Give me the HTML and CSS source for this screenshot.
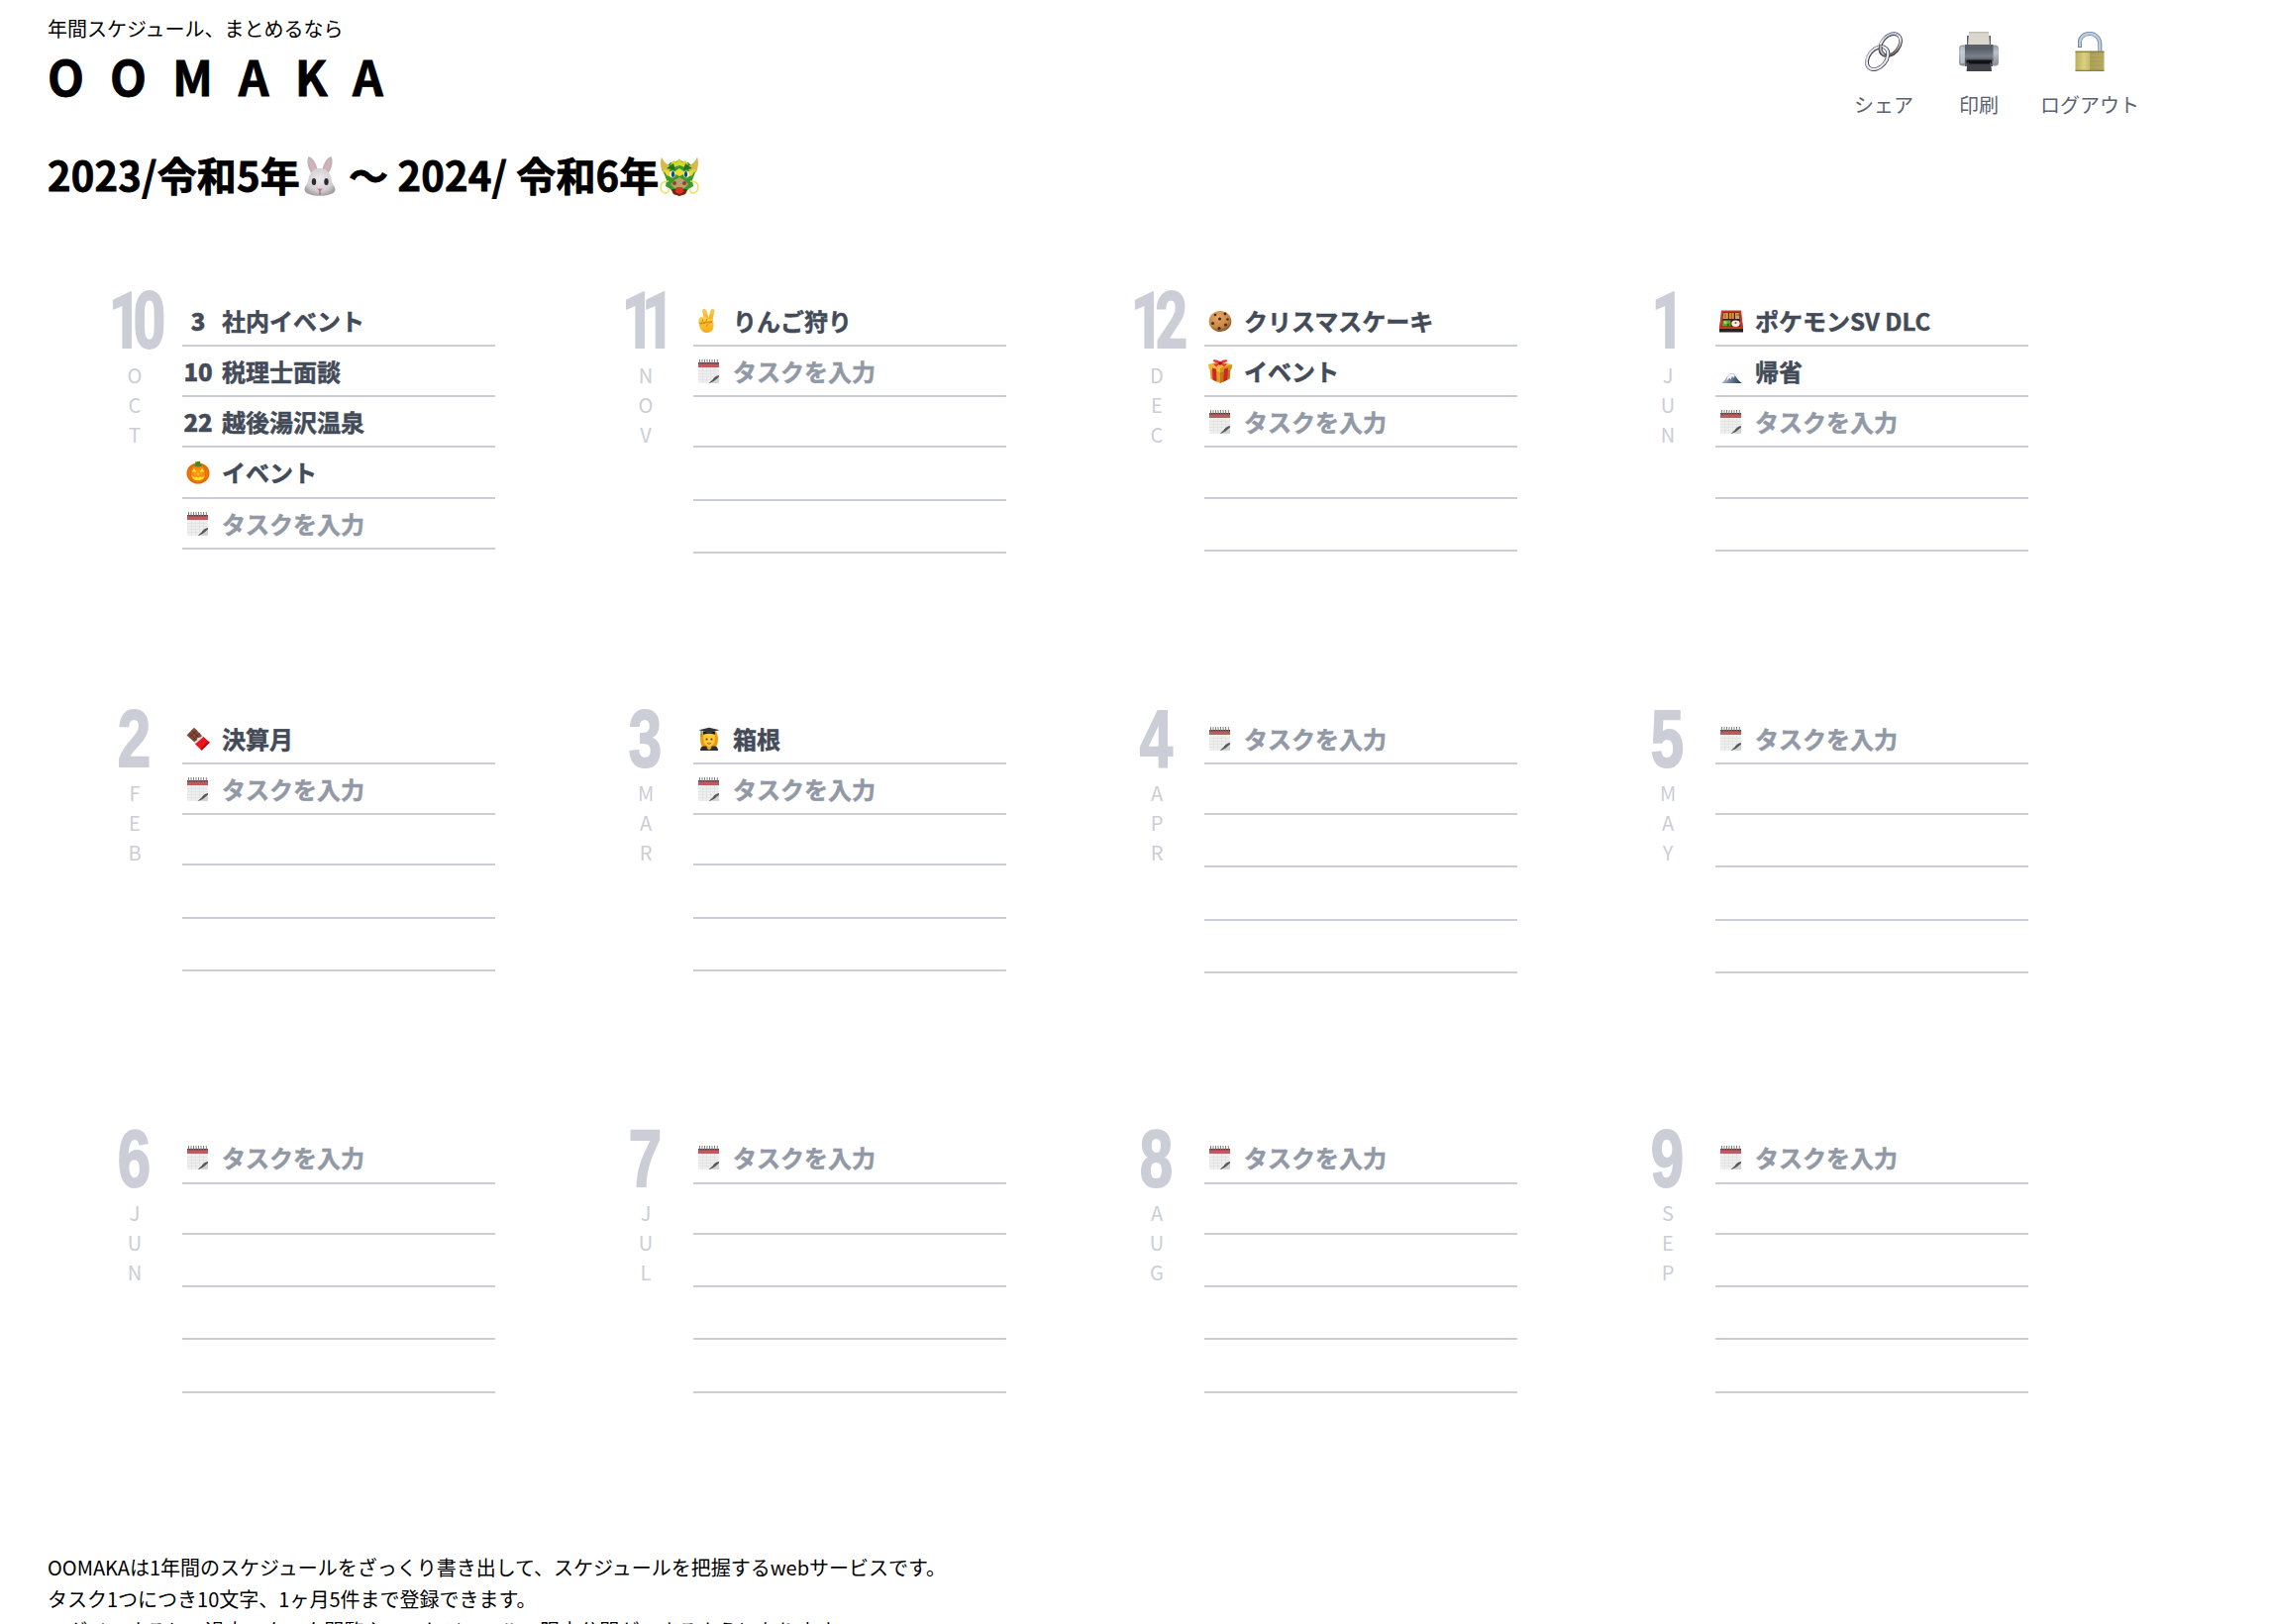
FILE: index.html
```html
<!DOCTYPE html>
<html lang="ja">
<head>
<meta charset="utf-8">
<title>OOMAKA</title>
<link rel="stylesheet" href="styles.css">
</head>
<body>
<svg class="sprite" width="0" height="0" aria-hidden="true">
  <defs>
    <linearGradient id="chrome" x1="0" y1="0" x2="1" y2="1"><stop offset="0" stop-color="#7fa3cf"/><stop offset=".35" stop-color="#eef3f8"/><stop offset=".7" stop-color="#8c929c"/><stop offset="1" stop-color="#4a3a3c"/></linearGradient>
    <linearGradient id="brass" x1="0" y1="0" x2="1" y2="0"><stop offset="0" stop-color="#b9ad58"/><stop offset=".3" stop-color="#d9d080"/><stop offset=".5" stop-color="#c5ba68"/><stop offset=".52" stop-color="#a89b52"/><stop offset="1" stop-color="#b3a860"/></linearGradient>
    <linearGradient id="steel" x1="0" y1="0" x2="0" y2="1"><stop offset="0" stop-color="#596069"/><stop offset=".25" stop-color="#596069"/><stop offset=".7" stop-color="#7b828c"/><stop offset="1" stop-color="#4b5058"/></linearGradient>
    <linearGradient id="cap" x1="0" y1="0" x2="0" y2="1"><stop offset="0" stop-color="#8e9aa6"/><stop offset=".35" stop-color="#b9c2ca"/><stop offset="1" stop-color="#858c94"/></linearGradient>
    <radialGradient id="fur" cx=".5" cy=".4" r=".6"><stop offset="0" stop-color="#eeeaec"/><stop offset=".7" stop-color="#d3ced1"/><stop offset="1" stop-color="#a59fa3"/></radialGradient>
    <radialGradient id="pump" cx=".5" cy=".5" r=".55"><stop offset="0" stop-color="#ffa21c"/><stop offset=".7" stop-color="#f47c08"/><stop offset="1" stop-color="#cf5300"/></radialGradient>
    <radialGradient id="bake" cx=".4" cy=".3" r=".7"><stop offset="0" stop-color="#e3a868"/><stop offset=".7" stop-color="#c88846"/><stop offset="1" stop-color="#8d5424"/></radialGradient>
    <linearGradient id="skin" x1="0" y1="0" x2="0" y2="1"><stop offset="0" stop-color="#ffd34a"/><stop offset="1" stop-color="#f5a916"/></linearGradient>
    <linearGradient id="fuji" x1="0" y1="0" x2="1" y2="0"><stop offset="0" stop-color="#aebccb"/><stop offset=".5" stop-color="#66788e"/><stop offset="1" stop-color="#1e3350"/></linearGradient>
  </defs>

  <symbol id="i-link" viewBox="0 0 40 40">
    <g fill="none">
      <ellipse cx="26.7" cy="13.2" rx="8.7" ry="12.4" transform="rotate(40 26.7 13.2)" stroke="#4b3437" stroke-width="3.6"/>
      <ellipse cx="26.5" cy="13" rx="8.8" ry="12.4" transform="rotate(40 26.5 13)" stroke="url(#chrome)" stroke-width="2.2"/>
      <ellipse cx="13.7" cy="26.7" rx="8.8" ry="13" transform="rotate(40 13.7 26.7)" stroke="#493e43" stroke-width="3.8"/>
      <ellipse cx="13.4" cy="26.5" rx="9" ry="13" transform="rotate(40 13.4 26.5)" stroke="#c4d3e2" stroke-width="2.4"/>
      <ellipse cx="13.6" cy="26.6" rx="8.8" ry="12.8" transform="rotate(40 13.6 26.6)" stroke="#fff" stroke-width=".9"/>
      <path d="M17 14.5c-1 3 .4 6.500 3.200 8.800" stroke="#4b4348" stroke-width="3.6"/>
      <path d="M17 14.500c-1 3 .4 6.500 3.200 8.800" stroke="#b9c0c9" stroke-width="1.800"/>
    </g>
  </symbol>
  <symbol id="i-printer" viewBox="0 0 40 40">
    <rect x="8" y="4" width="24" height="12" fill="#59626b"/>
    <path d="M10 0h20l1 14H9z" fill="#dcd7ce"/>
    <path d="M10 0h20v1.500H10z" fill="#c3beb5"/>
    <rect x="0" y="13.500" width="40" height="21" rx="3.500" fill="url(#cap)"/>
    <rect x="1.500" y="15" width="4" height="17" rx="1" fill="#c5cdd4" opacity=".7"/>
    <rect x="6" y="13" width="28.500" height="17" fill="url(#steel)"/>
    <path d="M6 30h28v5H6z" fill="#5d636b"/>
    <rect x="7.500" y="28.500" width="25.500" height="4" rx="1" fill="#15171a"/>
    <path d="M8.500 31h23.500l1 9H7.500z" fill="#3f444b"/>
    <path d="M10 30.500h21v2H10z" fill="#0e0f11"/>
  </symbol>
  <symbol id="i-lock" viewBox="0 0 30 40">
    <path d="M5 16V13C4 6 9 2 14.800 2s10.500 4 10.500 11v8" fill="none" stroke="#6e7f92" stroke-width="4"/>
    <path d="M5 15V13C4.500 6 9 2 14.800 2s10.400 4 10.400 11v8" fill="none" stroke="#b9cde4" stroke-width="2.400"/>
    <rect x=".5" y="19.500" width="29" height="20.500" rx="1" fill="url(#brass)"/>
    <path d="M.5 20.300h29M.5 39.300h29" stroke="#8d823e" stroke-width="1.200"/>
    <path d="M1 24h28M1 28h28M1 32h28M1 36h28" stroke="#e6dd94" stroke-width=".5" opacity=".35"/>
  </symbol>
  <symbol id="i-rabbit" viewBox="0 0 40 40">
    <path d="M13 19C8 13 6 5 8.500 0c5 1 9 9 9.500 17zM27 19c5-6 7-14 4.500-19-5 1-9 9-9.500 17z" fill="#bdb4b8"/>
    <path d="M13.500 17C10.500 12 9 7 10 3c3 2 5.500 8 6 13zM26.500 17c3-5 4.500-10 3.500-14-3 2-5.500 8-6 13z" fill="#dcaeb7"/>
    <path d="M20 12c8 0 11 6 12 13 .7 4 3.500 5 3.500 8.500C35.500 38 27 39.800 20 39.800S4.500 38 4.500 33.500C4.500 30 7.300 29 8 25c1-7 4-13 12-13z" fill="url(#fur)"/>
    <ellipse cx="14" cy="25.500" rx="2.200" ry="3.600" fill="#292c32"/><ellipse cx="26.500" cy="25.500" rx="2.200" ry="3.600" fill="#292c32"/>
    <path d="M17.300 32.500h5.600L20 36z" fill="#dc7088"/><path d="M20 35.500v3" stroke="#8c6168" stroke-width="1.200"/>
  </symbol>
  <symbol id="i-dragon" viewBox="0 0 40 40">
    <path d="M7 10l4-4 5-.5L20 3l4 2.500 5 .5 4 4 3 6-3 8 1 6-5 3-3 5-6 1.500-6-1.500-3-5-5-3 1-6-3-8z" fill="#3c982a"/>
    <path d="M3 16C0 9 1 4 2 .5 4 6 9 9 13 11l-5 5zM37 16c3-7 2-12 1-15.500C36 6 31 9 27 11l5 5z" fill="#d9b84c"/>
    <path d="M11 8l3-4 3 2 3-4 3 4 3-2 3 4-3 3-6-2-6 2z" fill="#d8d62f"/>
    <path d="M4 13l10 3 6-4 6 4 10-3-3 6-5 2-2-4-6 3-6-3-2 4-5-2z" fill="#e9dd32"/>
    <path d="M7 12l9 2-2-7zM33 12l-9 2 2-7z" fill="#1d7620"/>
    <ellipse cx="13" cy="18" rx="2.800" ry="3.600" fill="#e8f0e8"/><ellipse cx="27" cy="18" rx="2.800" ry="3.600" fill="#e8f0e8"/>
    <ellipse cx="13.500" cy="18" rx="1.600" ry="3" fill="#174a7a"/><ellipse cx="26.500" cy="18" rx="1.600" ry="3" fill="#174a7a"/>
    <path d="M15 24l5-3 5 3 4 4-4 4H15l-4-4z" fill="#b9a06a"/>
    <circle cx="15" cy="27" r="2" fill="#8e4133"/><circle cx="25" cy="27" r="2" fill="#8e4133"/>
    <path d="M12 33h16l-2 5-6 2-6-2z" fill="#7d2119"/><path d="M17 31h6l1 5-4 2-4-2z" fill="#e3311f"/>
    <path d="M9 25c-5 0-8 2-8 6s3 6 5 6 4-2 3-4M31 25c5 0 8 2 8 6s-3 6-5 6-4-2-3-4" fill="none" stroke="#ece24b" stroke-width="1.400"/>
  </symbol>
  <symbol id="i-pad" viewBox="0 0 24 24">
    <path d="M1 3h21v21H1z" fill="#efeff0"/>
    <path d="M1 11.500h21M1 14.500h21M1 17.500h21M1 20.500h18M5.500 8v16M9.500 8v16M13.500 8v15M17.500 8v11" stroke="#dddddf" stroke-width=".6"/>
    <path d="M1 3.500h21V8H1z" fill="#c25a5d"/><path d="M1 3h21v1.500H1z" fill="#713a3e"/>
    <path d="M2.500 0v4.500M5 0v4.500M7.500 0v4.500M10 0v4.500M12.500 0v4.500M15 0v4.500M17.500 0v4.500M20.300 0v4.500" stroke="#74747a" stroke-width=".9"/>
    <path d="M22 17.500l-4 2-3 4.500h7z" fill="#d4d5d7"/><path d="M22 16c-3 .5-5 2-6.500 4.500L11.500 24c3-.5 6-2 10.500-6.500z" fill="#56585c"/>
  </symbol>
  <symbol id="i-pumpkin" viewBox="0 0 24 24">
    <ellipse cx="12" cy="13" rx="11.500" ry="10.500" fill="url(#pump)"/>
    <path d="M8 4C3 8 3 18 8 22M16 4c5 4 5 14 0 18" fill="none" stroke="#db6203" stroke-width=".8"/>
    <path d="M9 1.500l5-.7.5 3.200 2 1.500-4.500 1-4-1 1.500-1.500z" fill="#4c861c"/>
    <path d="M6 11.500L8 7.500l2 4zM14 11.500l2-4 2 4zM11.200 14.500l.8-1.600 1.200 1.600z" fill="#ffeb28"/>
    <path d="M5 15c2 2 3 1.500 4 2l1.500-.5 1.500 1 2-1 1.500.5c1-.5 2-.3 3.500-2-.8 3.200-3.500 5-7 5s-6-2-7-5z" fill="#ffe72a"/>
  </symbol>
  <symbol id="i-victory" viewBox="0 0 24 24">
    <path d="M7.500 12L5.600 2C5.500 0 8.300-.2 8.900 1.500L11.500 10 14 1.500C14.600-.4 17.400.2 17 2.200L15 12z" fill="url(#skin)" stroke="#e4a11c" stroke-width=".5"/>
    <path d="M1.500 12c0-4 2.500-4.500 4-3.500 1.500-1.500 3.500-.8 4 .8l5.500 1.200c1.500 1.300 1.500 4 1.500 6.500 0 4-2.500 7-7 7-4.500 0-8-4.500-8-12z" fill="url(#skin)"/>
    <path d="M2 13.500c1 2.500 3.500 1 3.500-3M6 13c1.500 1.500 3.500.5 3.500-3M3 14.500c3 1.500 8-2.500 12-1.500-4 1-5 3-5.500 5" fill="none" stroke="#c97a12" stroke-width=".9"/>
  </symbol>
  <symbol id="i-cookie" viewBox="0 0 24 24">
    <ellipse cx="12" cy="12.500" rx="11.300" ry="10.500" fill="url(#bake)"/>
    <g fill="#4b2a1c"><circle cx="7" cy="6" r="1.300"/><circle cx="17" cy="5" r="1.400"/><circle cx="11.500" cy="10" r="1.600"/><circle cx="19.500" cy="10.500" r="1.200"/><circle cx="4.500" cy="14.500" r="1.500"/><circle cx="17.500" cy="16" r="1.600"/><circle cx="11" cy="19.500" r="1.600"/></g>
  </symbol>
  <symbol id="i-gift" viewBox="0 0 24 24">
    <path d="M1.500 8L12 11l10.500-3-1 11.500L12 24l-9.500-4.500z" fill="#dd9d20"/><path d="M12 11l10.500-3-1 11.500L12 24z" fill="#b87a14"/>
    <path d="M0 5l11-3 13 3-.5 4.500L12 13 .5 9.500z" fill="#f2b737"/><path d="M12 9l12-4-.5 4.500L12 13z" fill="#cf921d"/>
    <path d="M4 8.500l4 1.200.5 12.800-4-2zM16 9.800l4-1.200-.8 12-4 2z" fill="#d5202c"/>
    <path d="M12 5L5 2c-1-2 3-3 7 .5C16-1 20 0 19 2zM12 4l7 .5-3 3zM12 4l-7 .5 3 3z" fill="#e8323c"/><circle cx="12" cy="4" r="1.800" fill="#a8101c"/>
  </symbol>
  <symbol id="i-bento" viewBox="0 0 24 24">
    <path d="M2.500 2h19L24 20v3.500H0V20z" fill="#2a201f"/><path d="M2 1.500h20L24 20H0z" fill="#c93a27"/>
    <path d="M4 3.500h16l1.500 14.500H2.500z" fill="#38211c"/>
    <path d="M4.300 4h4.500v6H3.500z" fill="#d9a04a"/><path d="M9.800 4h5v6h-5z" fill="#e98e2c"/><path d="M16 4h3.700l.6 6H16z" fill="#bca282"/>
    <path d="M3.500 11.500h8v6H3z" fill="#6aa636"/><circle cx="6" cy="13.500" r="1.500" fill="#b4d76b"/><circle cx="9" cy="16" r="1.300" fill="#35681e"/>
    <ellipse cx="16.500" cy="14.800" rx="4.200" ry="3.200" fill="#f3efec"/><circle cx="16.500" cy="14" r="1" fill="#d62f27"/>
    <path d="M6 4.500v5M12.300 4v6M17 6h3" stroke="#87471c" stroke-width=".8"/>
  </symbol>
  <symbol id="i-fuji" viewBox="0 0 24 24">
    <path d="M2 24c4-2 6-8 9-10h3c3 3 5 8 9 10z" fill="url(#fuji)"/>
    <path d="M10.500 14.200h3.700l2 3.300-1.200-.5-.5 2-1.500-2-1.500 3.500-1-2L7 22l1.500-5z" fill="#f3f6f9"/>
  </symbol>
  <symbol id="i-choco" viewBox="0 0 24 24">
    <path d="M8 .8l8.500 8.700-8.200 6L.5 8.500z" fill="#844a38"/>
    <path d="M5.500 3.500l8 8M3 6l7.500 7.500M10.800 3.500L3.500 10.500M13.500 6.500l-7 7" stroke="#5d2c20" stroke-width=".8"/>
    <path d="M16.500 8.500l2 2-9 7.500-2-2.500 3-1.500 1-3 3-.5z" fill="#dadfe1"/>
    <path d="M17.500 10l6.200 5.800L15.800 23.700 9 17.500z" fill="#ee161d"/><path d="M23.700 15.800l-7.900 7.900-1.500-1.400 7.800-8z" fill="#c20911"/>
  </symbol>
  <symbol id="i-grad" viewBox="0 0 24 24">
    <path d="M3 24c0-4 3-6 9-6s9 2 9 6z" fill="#2c2d31"/><path d="M9 17h6l-1 5-2 1.500-2-1.500z" fill="#eba81e"/>
    <path d="M4.500 5h15c2 5 2 10 0 14.500H4.500C2.500 15 2.500 10 4.500 5z" fill="#e8a00f"/>
    <path d="M6.500 8c3-2 8-2 11 0 1 7-1.500 12-5.500 12S5.500 15 6.500 8z" fill="#ffc93a"/>
    <circle cx="9.500" cy="12.500" r="1" fill="#4c2e12"/><circle cx="14.500" cy="12.500" r="1" fill="#4c2e12"/><path d="M10 16.500q2 1.500 4 0" fill="none" stroke="#b54321"/>
    <path d="M12 .8l10.500 2.500L12 6 1.500 3.300z" fill="#35363a"/><path d="M6 4.500v3.300c4-1.500 8-1.500 12 0V4.500L12 6z" fill="#18191c"/><path d="M4 4v6" stroke="#6b6b6e"/>
  </symbol>
</svg>

<header class="header">
  <div class="brand">
    <p class="tagline">年間スケジュール、まとめるなら</p>
    <h1 class="logo">OOMAKA</h1>
  </div>
  <nav class="actions">
    <a class="action action-share"><svg class="action-icon"><use href="#i-link"/></svg>シェア</a>
    <a class="action action-print"><svg class="action-icon"><use href="#i-printer"/></svg>印刷</a>
    <a class="action"><svg class="action-icon"><use href="#i-lock"/></svg>ログアウト</a>
  </nav>
</header>

<h2 class="period">2023/令和5年<svg class="zodiac"><use href="#i-rabbit"/></svg> 〜 2024/ 令和6年<svg class="zodiac"><use href="#i-dragon"/></svg></h2>

<main class="year">
  <section class="month">
    <div class="month-head"><span class="num num-pair">10</span><span class="abbr">OCT</span></div>
    <ul class="tasks">
      <li class="task"><b class="mark">3</b>社内イベント</li>
      <li class="task"><b class="mark">10</b>税理士面談</li>
      <li class="task"><b class="mark">22</b>越後湯沢温泉</li>
      <li class="task"><svg class="mark"><use href="#i-pumpkin"/></svg>イベント</li>
      <li class="task input"><svg class="mark"><use href="#i-pad"/></svg>タスクを入力</li>
    </ul>
  </section>
  <section class="month">
    <div class="month-head"><span class="num num-ones">11</span><span class="abbr">NOV</span></div>
    <ul class="tasks">
      <li class="task"><svg class="mark"><use href="#i-victory"/></svg>りんご狩り</li>
      <li class="task input"><svg class="mark"><use href="#i-pad"/></svg>タスクを入力</li>
      <li class="task"></li><li class="blank"></li><li class="blank"></li>
    </ul>
  </section>
  <section class="month">
    <div class="month-head"><span class="num num-pair">12</span><span class="abbr">DEC</span></div>
    <ul class="tasks">
      <li class="task"><svg class="mark"><use href="#i-cookie"/></svg>クリスマスケーキ</li>
      <li class="task"><svg class="mark"><use href="#i-gift"/></svg>イベント</li>
      <li class="task input"><svg class="mark"><use href="#i-pad"/></svg>タスクを入力</li>
      <li class="task"></li><li class="blank"></li>
    </ul>
  </section>
  <section class="month">
    <div class="month-head"><span class="num">1</span><span class="abbr">JUN</span></div>
    <ul class="tasks">
      <li class="task"><svg class="mark"><use href="#i-bento"/></svg>ポケモンSV DLC</li>
      <li class="task"><svg class="mark"><use href="#i-fuji"/></svg>帰省</li>
      <li class="task input"><svg class="mark"><use href="#i-pad"/></svg>タスクを入力</li>
      <li class="task"></li><li class="blank"></li>
    </ul>
  </section>

  <section class="month">
    <div class="month-head"><span class="num num-round">2</span><span class="abbr">FEB</span></div>
    <ul class="tasks">
      <li class="task"><svg class="mark"><use href="#i-choco"/></svg>決算月</li>
      <li class="task input"><svg class="mark"><use href="#i-pad"/></svg>タスクを入力</li>
      <li class="task"></li><li class="blank"></li><li class="blank"></li>
    </ul>
  </section>
  <section class="month">
    <div class="month-head"><span class="num num-round">3</span><span class="abbr">MAR</span></div>
    <ul class="tasks">
      <li class="task"><svg class="mark"><use href="#i-grad"/></svg>箱根</li>
      <li class="task input"><svg class="mark"><use href="#i-pad"/></svg>タスクを入力</li>
      <li class="task"></li><li class="blank"></li><li class="blank"></li>
    </ul>
  </section>
  <section class="month">
    <div class="month-head"><span class="num num-round">4</span><span class="abbr">APR</span></div>
    <ul class="tasks">
      <li class="task input"><svg class="mark"><use href="#i-pad"/></svg>タスクを入力</li>
      <li class="task"></li><li class="blank"></li><li class="blank"></li><li class="blank"></li>
    </ul>
  </section>
  <section class="month">
    <div class="month-head"><span class="num num-round">5</span><span class="abbr">MAY</span></div>
    <ul class="tasks">
      <li class="task input"><svg class="mark"><use href="#i-pad"/></svg>タスクを入力</li>
      <li class="task"></li><li class="blank"></li><li class="blank"></li><li class="blank"></li>
    </ul>
  </section>

  <section class="month">
    <div class="month-head"><span class="num num-round">6</span><span class="abbr">JUN</span></div>
    <ul class="tasks">
      <li class="task input"><svg class="mark"><use href="#i-pad"/></svg>タスクを入力</li>
      <li class="task"></li><li class="blank"></li><li class="blank"></li><li class="blank"></li>
    </ul>
  </section>
  <section class="month">
    <div class="month-head"><span class="num num-round">7</span><span class="abbr">JUL</span></div>
    <ul class="tasks">
      <li class="task input"><svg class="mark"><use href="#i-pad"/></svg>タスクを入力</li>
      <li class="task"></li><li class="blank"></li><li class="blank"></li><li class="blank"></li>
    </ul>
  </section>
  <section class="month">
    <div class="month-head"><span class="num num-round">8</span><span class="abbr">AUG</span></div>
    <ul class="tasks">
      <li class="task input"><svg class="mark"><use href="#i-pad"/></svg>タスクを入力</li>
      <li class="task"></li><li class="blank"></li><li class="blank"></li><li class="blank"></li>
    </ul>
  </section>
  <section class="month">
    <div class="month-head"><span class="num num-round">9</span><span class="abbr">SEP</span></div>
    <ul class="tasks">
      <li class="task input"><svg class="mark"><use href="#i-pad"/></svg>タスクを入力</li>
      <li class="task"></li><li class="blank"></li><li class="blank"></li><li class="blank"></li>
    </ul>
  </section>
</main>

<footer class="about">
  <p>OOMAKAは1年間のスケジュールをざっくり書き出して、スケジュールを把握するwebサービスです。</p>
  <p>タスク1つにつき10文字、1ヶ月5件まで登録できます。</p>
  <p>ログインすると、過去のタスク閲覧や、スケジュールの限定公開ができるようになります。</p>
</footer>
</body>
</html>
```
FILE: styles.css
```css
* { box-sizing: border-box; margin: 0; padding: 0; }

body {
  height: 1640px;
  overflow: hidden;
  background: #fff;
  color: #000;
  font: 20px/32px "Noto Sans CJK JP", sans-serif;
}

.sprite { position: absolute; }

/* Header */
.header {
  display: flex;
  justify-content: space-between;
  height: 142px;
  padding: 13px 134px 0 48px;
}
.tagline { line-height: 32px; }
.logo {
  font-size: 48px;
  line-height: 62px;
  letter-spacing: 26px;
  -webkit-text-stroke: .8px;
}
.actions { display: flex; padding-top: 19px; }
.action {
  display: flex;
  flex-direction: column;
  align-items: center;
  color: #5b6371;
  line-height: 30px;
}
.action-icon { width: 40px; height: 40px; margin-bottom: 19px; }
.action-share { margin-right: 46px; }
.action-print { margin-right: 42px; }

.period {
  height: 146px;
  padding-left: 48px;
  font-size: 40px;
  line-height: 69px;
  letter-spacing: .15px;
  -webkit-text-stroke: .8px;
  white-space: nowrap;
}
.zodiac { width: 40px; height: 40px; vertical-align: -5px; }

/* Twelve month grid */
.year {
  display: grid;
  grid-template-columns: repeat(4, 516px);
  grid-template-rows: 421.9px 423.7px 428.4px;
  padding: 5px 0 0 88px;
}
.month { display: flex; align-items: flex-start; }
.month-head {
  display: flex;
  flex-direction: column;
  align-items: center;
  width: 96px;
  color: #cbced6;
}
.num {
  height: 59px;
  font: 900 82px/63px Roboto, sans-serif;
  transform: scaleX(.71);
}
.num-pair { margin-right: 4px; letter-spacing: -12.5px; }
.num-ones { margin-right: 8px; letter-spacing: -19px; }
.num-round {
  font: 700 81px/62px "Liberation Sans", sans-serif;
  transform: scaleX(.74);
  -webkit-text-stroke: 2px;
}
.abbr {
  width: 30px;
  margin: 17px 1px 0 0;
  line-height: 30px;
  letter-spacing: 10px;
  writing-mode: vertical-rl;
  text-orientation: upright;
}

.tasks { width: 316px; margin-top: 5.8px; list-style: none; }
.task, .blank { border-bottom: 2px solid #cbced6; }
.task {
  display: flex;
  align-items: center;
  height: 51.2px;
  padding-top: 1px;
  color: #434b58;
  font-size: 24px;
  font-weight: 700;
  white-space: pre;
  -webkit-text-stroke: .5px;
}
.blank { height: 53.3px; }
.input { color: #9299a6; }
.mark { flex: none; width: 32px; height: 24px; margin-right: 8px; line-height: 24px; text-align: center; }

.about { padding-left: 48px; white-space: nowrap; }
```
